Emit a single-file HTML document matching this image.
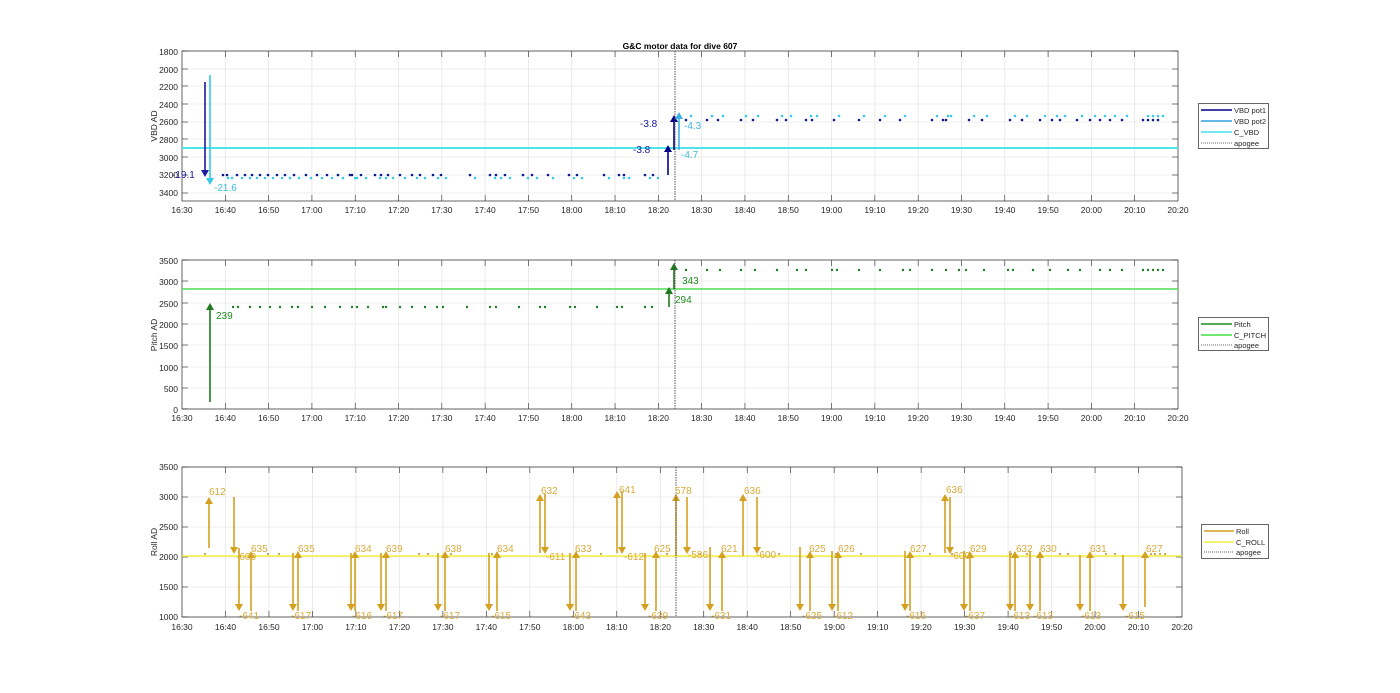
<!DOCTYPE html>
<html><head><meta charset="utf-8"><style>
html,body{margin:0;padding:0;background:#fff;width:1400px;height:693px;overflow:hidden}
svg text{font-family:"Liberation Sans",sans-serif}
.t{font-size:8.5px;fill:#262626}
</style></head><body>
<svg id="s" width="1400" height="693" viewBox="0 0 1400 693" xmlns="http://www.w3.org/2000/svg">
<rect width="1400" height="693" fill="#fff"/>
<g id="grid"></g>
<defs>
<g id="xt" class="t" text-anchor="middle">
<text x="0">16:30</text><text x="43.5">16:40</text><text x="87">16:50</text><text x="130.4">17:00</text><text x="173.9">17:10</text><text x="217.4">17:20</text><text x="260.9">17:30</text><text x="304.3">17:40</text><text x="347.8">17:50</text><text x="391.3">18:00</text><text x="434.8">18:10</text><text x="478.3">18:20</text><text x="521.7">18:30</text><text x="565.2">18:40</text><text x="608.7">18:50</text><text x="652.2">19:00</text><text x="695.7">19:10</text><text x="739.1">19:20</text><text x="782.6">19:30</text><text x="826.1">19:40</text><text x="869.6">19:50</text><text x="913">20:00</text><text x="956.5">20:10</text><text x="1000">20:20</text>
</g>
</defs>
<use href="#xt" transform="translate(182,213) scale(0.996,1)"/>
<use href="#xt" transform="translate(182,421) scale(0.996,1)"/>
<use href="#xt" transform="translate(182,630)"/>
<text x="680" y="49" text-anchor="middle" style="font-size:8.5px;font-weight:bold" fill="#000">G&amp;C motor data for dive 607</text>
<g class="t" text-anchor="end">
<text x="178" y="55">1800</text><text x="178" y="73">2000</text><text x="178" y="90">2200</text><text x="178" y="108">2400</text><text x="178" y="125">2600</text><text x="178" y="143">2800</text><text x="178" y="161">3000</text><text x="178" y="178">3200</text><text x="178" y="196">3400</text>
<text x="178" y="264">3500</text><text x="178" y="285">3000</text><text x="178" y="307">2500</text><text x="178" y="328">2000</text><text x="178" y="349">1500</text><text x="178" y="371">1000</text><text x="178" y="392">500</text><text x="178" y="413">0</text>
<text x="178" y="470">3500</text><text x="178" y="500">3000</text><text x="178" y="530">2500</text><text x="178" y="560">2000</text><text x="178" y="590">1500</text><text x="178" y="620">1000</text>
</g>
<text class="t" transform="translate(157,126) rotate(-90)" text-anchor="middle">VBD AD</text>
<text class="t" transform="translate(157,335) rotate(-90)" text-anchor="middle">Pitch AD</text>
<text class="t" transform="translate(157,542) rotate(-90)" text-anchor="middle">Roll AD</text>
<g id="data"></g>
<g style="font-size:10px">
<text x="172" y="178" fill="#1a1a9a">-19.1</text>
<text x="214" y="191" fill="#3cc0d8">-21.6</text>
<text x="633" y="153" fill="#1a1a9a">-3.8</text>
<text x="640" y="127" fill="#1a1a9a">-3.8</text>
<text x="684" y="129" fill="#3cb4e0">-4.3</text>
<text x="681" y="158" fill="#3cc0d8">-4.7</text>
<text x="216" y="319" fill="#1f8a1f">239</text>
<text x="675" y="303" fill="#1f8a1f">294</text>
<text x="682" y="284" fill="#1f8a1f">343</text>
</g>
<g style="font-size:10px" fill="#d9aa3a">
<text x="209" y="495">612</text><text x="236" y="560">-600</text><text x="239" y="619">-641</text><text x="251" y="552">635</text>
<text x="291" y="619">-617</text><text x="298" y="552">635</text><text x="352" y="619">-616</text><text x="355" y="552">634</text>
<text x="383" y="619">-617</text><text x="386" y="552">639</text><text x="440" y="619">-617</text><text x="445" y="552">638</text>
<text x="491" y="619">-615</text><text x="497" y="552">634</text><text x="541" y="494">632</text><text x="546" y="560">-611</text>
<text x="571" y="619">-643</text><text x="575" y="552">633</text><text x="619" y="493">641</text><text x="624" y="560">-612</text>
<text x="648" y="619">-639</text><text x="654" y="552">625</text><text x="675" y="494">578</text><text x="688" y="558">-586</text>
<text x="711" y="619">-631</text><text x="721" y="552">621</text><text x="744" y="494">636</text><text x="756" y="558">-600</text>
<text x="802" y="619">-625</text><text x="809" y="552">625</text><text x="833" y="619">-612</text><text x="838" y="552">626</text>
<text x="906" y="619">-616</text><text x="910" y="552">627</text><text x="946" y="493">636</text><text x="950" y="559">-600</text>
<text x="965" y="619">-637</text><text x="970" y="552">629</text><text x="1010" y="619">-613</text><text x="1016" y="552">632</text>
<text x="1033" y="619">-613</text><text x="1040" y="552">630</text><text x="1081" y="619">-613</text><text x="1090" y="552">631</text>
<text x="1125" y="619">-615</text><text x="1146" y="552">627</text>
</g>
<!-- legends -->
<g style="font-size:7.5px" fill="#262626">
<rect x="1198.5" y="103.5" width="70" height="45" fill="#fff" stroke="#262626" stroke-width="0.7"/>
<line x1="1201" y1="110" x2="1232" y2="110" stroke="#00008b" stroke-width="1.5"/><text x="1234" y="113">VBD pot1</text>
<line x1="1201" y1="121" x2="1232" y2="121" stroke="#30a0e0" stroke-width="1.5"/><text x="1234" y="124">VBD pot2</text>
<line x1="1201" y1="132" x2="1232" y2="132" stroke="#40e0e8" stroke-width="1.5"/><text x="1234" y="135">C_VBD</text>
<line x1="1201" y1="143" x2="1232" y2="143" stroke="#333" stroke-width="0.8" stroke-dasharray="1,1"/><text x="1234" y="146">apogee</text>
<rect x="1198.5" y="317.5" width="70" height="33" fill="#fff" stroke="#262626" stroke-width="0.7"/>
<line x1="1201" y1="324" x2="1232" y2="324" stroke="#1f8a1f" stroke-width="1.5"/><text x="1234" y="327">Pitch</text>
<line x1="1201" y1="335" x2="1232" y2="335" stroke="#40e040" stroke-width="1.5"/><text x="1234" y="338">C_PITCH</text>
<line x1="1201" y1="345" x2="1232" y2="345" stroke="#333" stroke-width="0.8" stroke-dasharray="1,1"/><text x="1234" y="348">apogee</text>
<rect x="1201.5" y="524.5" width="67" height="34" fill="#fff" stroke="#262626" stroke-width="0.7"/>
<line x1="1204" y1="531" x2="1234" y2="531" stroke="#d4a020" stroke-width="1.5"/><text x="1236" y="534">Roll</text>
<line x1="1204" y1="542" x2="1234" y2="542" stroke="#f0f040" stroke-width="1.5"/><text x="1236" y="545">C_ROLL</text>
<line x1="1204" y1="552" x2="1234" y2="552" stroke="#333" stroke-width="0.8" stroke-dasharray="1,1"/><text x="1236" y="555">apogee</text>
</g>
</svg>
<script>
var NS="http://www.w3.org/2000/svg",G=document.getElementById('grid'),D=document.getElementById('data');
function el(p,t,a){var e=document.createElementNS(NS,t);for(var k in a)e.setAttribute(k,a[k]);p.appendChild(e);return e;}
var axes=[{x0:182,x1:1178,y0:51,y1:201,yt:[51,69,86,104,122,139,157,175,193]},
{x0:182,x1:1178,y0:260,y1:409,yt:[260,281,303,324,345,367,388,409]},
{x0:182,x1:1182,y0:467,y1:617,yt:[467,497,527,557,587,617]}];
axes.forEach(function(a){
 el(G,'rect',{x:a.x0,y:a.y0,width:a.x1-a.x0,height:a.y1-a.y0,fill:'#fff'});
 for(var i=1;i<23;i++){var x=a.x0+i*(a.x1-a.x0)/23;el(G,'line',{x1:x,x2:x,y1:a.y0,y2:a.y1,stroke:'#e6e6e6','stroke-width':0.8});
  el(G,'line',{x1:x,x2:x,y1:a.y1,y2:a.y1-6,stroke:'#262626','stroke-width':0.6});el(G,'line',{x1:x,x2:x,y1:a.y0,y2:a.y0+6,stroke:'#262626','stroke-width':0.6});}
 a.yt.forEach(function(y){el(G,'line',{x1:a.x0,x2:a.x1,y1:y,y2:y,stroke:'#e6e6e6','stroke-width':0.8});
  el(G,'line',{x1:a.x0,x2:a.x0+6,y1:y,y2:y,stroke:'#262626','stroke-width':0.6});el(G,'line',{x1:a.x1,x2:a.x1-6,y1:y,y2:y,stroke:'#262626','stroke-width':0.6});});
 el(G,'rect',{x:a.x0,y:a.y0,width:a.x1-a.x0,height:a.y1-a.y0,fill:'none',stroke:'#262626','stroke-width':0.7});
});
function dot(x,y,c,r){el(D,'circle',{cx:x,cy:y,r:r||1.3,fill:c});}
function arr(x,ya,yb,c,w){var d=yb>ya?1:-1;el(D,'line',{x1:x,x2:x,y1:ya,y2:yb-d*6,stroke:c,'stroke-width':w||1.6});
 el(D,'polygon',{points:(x-4)+','+(yb-d*7)+' '+(x+4)+','+(yb-d*7)+' '+x+','+yb,fill:c});}
// top
el(D,'line',{x1:182,x2:1178,y1:148,y2:148,stroke:'#4fe4ec','stroke-width':2});
var b1=[223,227,237,245,252,260,268,277,285,294,306,317,327,338,350,352,361,375,381,388,400,412,420,433,441,470,490,496,505,523,532,548,569,577,604,619,624,645,653];
b1.forEach(function(x){dot(x,175,'#0a1a8a');dot(x+5,178,'#38c8e8');});
var a1=[686,707,718,741,753,777,786,806,812,834,859,880,900,932,943,946,969,982,1010,1022,1040,1052,1060,1077,1090,1100,1110,1122,1143,1148,1153,1158];
a1.forEach(function(x){dot(x,120,'#0a1a8a');dot(x+5,116,'#38c8e8');});
arr(205,82,177,'#1a1aa0');arr(210,75,185,'#38c8e8');
arr(668,175,145,'#00008b');arr(674,150,115,'#00008b');arr(679,150,112,'#40b0e8');
el(D,'line',{x1:675,x2:675,y1:51,y2:201,stroke:'#555','stroke-width':1,'stroke-dasharray':'1.5,1'});
// middle
el(D,'line',{x1:182,x2:1178,y1:289,y2:289,stroke:'#50dc50','stroke-width':1.5});
[233,238,250,260,270,280,292,298,312,325,340,352,357,368,383,386,400,412,425,437,443,467,490,496,519,540,545,570,575,597,617,622,645,652].forEach(function(x){dot(x,307,'#1f7a1f',1.2);});
[686,707,720,741,755,777,797,806,832,837,859,880,903,910,932,946,959,966,984,1008,1013,1033,1050,1068,1080,1100,1110,1122,1143,1148,1153,1158,1163].forEach(function(x){dot(x,270,'#1f7a1f',1.2);});
arr(210,402,303,'#1f7a1f');arr(669,307,287,'#1f7a1f');arr(674,289,263,'#1f7a1f');
el(D,'line',{x1:675,x2:675,y1:260,y2:409,stroke:'#555','stroke-width':1,'stroke-dasharray':'1.5,1'});
// bottom
el(D,'line',{x1:182,x2:1182,y1:556,y2:556,stroke:'#f4f040','stroke-width':1.5});
var C='#d4a020';
[205,268,279,419,428,451,492,601,667,700,779,836,861,930,952,1011,1027,1060,1068,1106,1115,1151,1155,1160,1165].forEach(function(x){dot(x,554,'#c09030',1);});
var up=[[209,548,497],[251,611,551],[298,611,551],[355,611,551],[386,611,551],[445,611,551],[497,611,551],[540,553,494],[576,611,551],[617,553,491],[656,611,551],[676,556,494],[722,611,551],[743,556,494],[810,611,551],[838,611,551],[910,611,551],[945,553,494],[970,611,551],[1015,611,551],[1040,611,551],[1090,611,551],[1145,607,551]];
var dn=[[234,497,554],[239,548,611],[293,553,611],[351,553,611],[381,553,611],[438,553,611],[489,553,611],[545,494,554],[570,553,611],[622,491,554],[645,553,611],[687,497,554],[710,547,611],[757,497,554],[800,547,611],[832,551,611],[905,551,611],[950,497,554],[964,551,611],[1010,551,611],[1030,551,611],[1080,555,611],[1123,555,611]];
up.forEach(function(a){arr(a[0],a[1],a[2],C,1.6);});dn.forEach(function(a){arr(a[0],a[1],a[2],C,1.6);});
el(D,'line',{x1:676,x2:676,y1:467,y2:617,stroke:'#555','stroke-width':1,'stroke-dasharray':'1.5,1'});
</script>
</body></html>
